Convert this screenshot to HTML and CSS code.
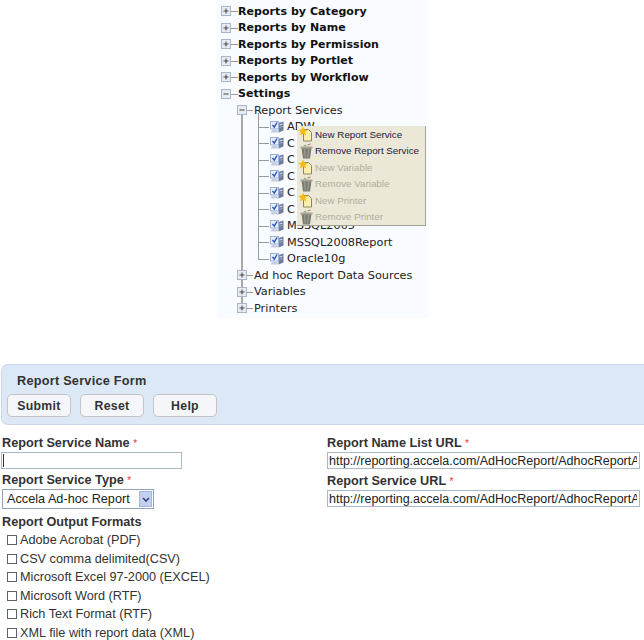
FILE: index.html
```html
<!DOCTYPE html>
<html lang="en">
<head>
<meta charset="utf-8">
<title>Report Service Form</title>
<link rel="stylesheet" href="styles.css">
</head>
<body>
<svg class="defs" width="0" height="0" aria-hidden="true">
  <symbol id="plus" viewBox="0 0 10 10"><rect x=".5" y=".5" width="9" height="9" fill="#e6eaf2" stroke="#aab5c8"/><path d="M2.500 5h5M5 2.500v5" stroke="#444" fill="none"/></symbol>
  <symbol id="minus" viewBox="0 0 10 10"><rect x=".5" y=".5" width="9" height="9" fill="#e6eaf2" stroke="#aab5c8"/><path d="M2.500 5h5" stroke="#444" fill="none"/></symbol>
  <symbol id="server" viewBox="0 0 16 14">
    <path d="M9.500 3l5-1.500v9l-5 2z" fill="#6f7c9e"/>
    <path d="M10.500 4.500l3-.9v1.100l-3 .9z" fill="#d5dbec"/>
    <path d="M10.500 7l3-.9v.8l-3 .9z" fill="#aab4cc"/>
    <rect x="1.500" y="1.500" width="8" height="7.500" fill="#e6effc" stroke="#9bb0d6"/>
    <path d="M3.500 4.800l1.800 2.400 2.700-4.700" stroke="#2a55c2" stroke-width="1.400" fill="none"/>
    <path d="M3 10h5l2 2.500H1.500z" fill="#c3cee2"/>
  </symbol>
  <symbol id="new" viewBox="0 0 18 16">
    <path d="M6.500 3.500h5l3 3v8.500h-8z" fill="#fdeeaf" stroke="#8b8664"/>
    <path d="M6 .5l1.400 3.100 3.500.3-2.700 2.200.9 3.400L6 7.700 2.900 9.500l.9-3.400L1.100 3.900l3.500-.3z" fill="#f5bd14"/>
  </symbol>
  <symbol id="trash" viewBox="0 0 18 16">
    <path d="M4.500 5h10l-1.500 10.500H6z" fill="#7d7d74"/>
    <path d="M7.500 6l.7 8.500M11.500 6l-.7 8.500" stroke="#a3a398" fill="none"/>
    <path d="M3.500 3.500h12v2h-12z" fill="#a8a69a"/>
    <path d="M6 3.500l2-2 2 2z" fill="#8faa80"/>
    <path d="M10.500 2l3-1" stroke="#c26a5a" fill="none"/>
  </symbol>
</svg>

<section class="tree-panel">
  <div class="row top"><svg class="exp"><use href="#plus"/></svg><b>Reports by Category</b></div>
  <div class="row top"><svg class="exp"><use href="#plus"/></svg><b>Reports by Name</b></div>
  <div class="row top"><svg class="exp"><use href="#plus"/></svg><b>Reports by Permission</b></div>
  <div class="row top"><svg class="exp"><use href="#plus"/></svg><b>Reports by Portlet</b></div>
  <div class="row top"><svg class="exp"><use href="#plus"/></svg><b>Reports by Workflow</b></div>
  <div class="row top"><svg class="exp"><use href="#minus"/></svg><b>Settings</b></div>
  <div class="group">
    <div class="row second"><svg class="exp"><use href="#minus"/></svg><span>Report Services</span></div>
    <div class="leaves">
      <div class="row leaf"><svg class="srv"><use href="#server"/></svg><span>ADW</span></div>
      <div class="row leaf"><svg class="srv"><use href="#server"/></svg><span>C</span></div>
      <div class="row leaf"><svg class="srv"><use href="#server"/></svg><span>C</span></div>
      <div class="row leaf"><svg class="srv"><use href="#server"/></svg><span>C</span></div>
      <div class="row leaf"><svg class="srv"><use href="#server"/></svg><span>C</span></div>
      <div class="row leaf"><svg class="srv"><use href="#server"/></svg><span>C</span></div>
      <div class="row leaf"><svg class="srv"><use href="#server"/></svg><span>MSSQL2005</span></div>
      <div class="row leaf"><svg class="srv"><use href="#server"/></svg><span>MSSQL2008Report</span></div>
      <div class="row leaf"><svg class="srv"><use href="#server"/></svg><span>Oracle10g</span></div>
    </div>
    <div class="row second"><svg class="exp"><use href="#plus"/></svg><span>Ad hoc Report Data Sources</span></div>
    <div class="row second"><svg class="exp"><use href="#plus"/></svg><span>Variables</span></div>
    <div class="row second"><svg class="exp"><use href="#plus"/></svg><span>Printers</span></div>
  </div>

  <div class="menu">
    <div class="item"><svg class="mi"><use href="#new"/></svg>New Report Service</div>
    <div class="item"><svg class="mi"><use href="#trash"/></svg>Remove Report Service</div>
    <div class="item off"><svg class="mi"><use href="#new"/></svg>New Variable</div>
    <div class="item off"><svg class="mi"><use href="#trash"/></svg>Remove Variable</div>
    <div class="item off"><svg class="mi"><use href="#new"/></svg>New Printer</div>
    <div class="item off"><svg class="mi"><use href="#trash"/></svg>Remove Printer</div>
  </div>
</section>

<section class="form-head">
  <h2>Report Service Form</h2>
  <div class="btns">
    <button class="btn">Submit</button>
    <button class="btn">Reset</button>
    <button class="btn">Help</button>
  </div>
</section>

<form class="form">
  <div class="col left">
    <label class="lbl">Report Service Name <i>*</i></label>
    <div class="name-wrap"><input class="txt name" type="text"></div>
    <label class="lbl">Report Service Type <i>*</i></label>
    <div class="select"><span>Accela Ad-hoc Report</span><span class="arrow"><svg width="8" height="5" viewBox="0 0 8 5"><path d="M1 1l3 3 3-3" stroke="#2c3f78" stroke-width="1.500" fill="none"/></svg></span></div>
    <div class="lbl formats">Report Output Formats</div>
    <label class="chk"><span class="box"></span>Adobe Acrobat (PDF)</label>
    <label class="chk"><span class="box"></span>CSV comma delimited(CSV)</label>
    <label class="chk"><span class="box"></span>Microsoft Excel 97-2000 (EXCEL)</label>
    <label class="chk"><span class="box"></span>Microsoft Word (RTF)</label>
    <label class="chk"><span class="box"></span>Rich Text Format (RTF)</label>
    <label class="chk"><span class="box"></span>XML file with report data (XML)</label>
  </div>
  <div class="col right">
    <label class="lbl">Report Name List URL <i>*</i></label>
    <input class="txt url" type="text" value="http://reporting.accela.com/AdHocReport/AdhocReportAdminService.asmx">
    <label class="lbl">Report Service URL <i>*</i></label>
    <input class="txt url" type="text" value="http://reporting.accela.com/AdHocReport/AdhocReportAdminService.asmx">
  </div>
</form>
</body>
</html>
```

FILE: styles.css
```css
* { box-sizing: border-box; }
html, body { margin: 0; height: 640px; overflow: hidden; background: #fff; }
body { font-family: "Liberation Sans", Arial, sans-serif; color: #222; }
.defs { position: absolute; }

.tree-panel {
  position: relative;
  margin-left: 217px;
  width: 212px;
  height: 318px;
  padding-top: 3px;
  background: #f8fbff;
  font: 11.300px "DejaVu Sans", Verdana, sans-serif;
  color: #222;
}
.row { display: flex; align-items: center; height: 16.500px; white-space: nowrap; position: relative; }
.row b { font-weight: 700; font-size: 11px; color: #111; letter-spacing: .06px; }
.exp { width: 10px; height: 10px; flex: none; position: relative; z-index: 1; }
.top { padding-left: 4px; }
.top .exp { margin-right: 7px; }
.top::before, .second::before {
  content: ""; position: absolute; top: 8px; height: 1px; background: #999;
}
.top::before { left: 13px; width: 8px; }
.second { padding-left: 20px; }
.second::before { left: 30px; width: 6px; }
.second .exp { margin-right: 7px; }
.group { position: relative; }
.group::before {
  content: ""; position: absolute; left: 24px; top: 12px; bottom: 8px; width: 2px; background: #a8a8a8;
}
.leaves { position: relative; }
.leaves::before {
  content: ""; position: absolute; left: 41px; top: -6px; bottom: 8px; width: 1px; background: #999;
}
.leaf { padding-left: 52px; }
.leaf::before { content: ""; position: absolute; left: 41px; top: 8px; width: 11px; height: 1px; background: #999; }
.srv { width: 16px; height: 14px; flex: none; margin-right: 2px; }

.menu {
  position: absolute;
  left: 80px; top: 126px;
  width: 129px; height: 100px;
  background: #ebe8d8;
  border-right: 1px solid #a5a398;
  border-bottom: 1px solid #a5a398;
  font: 9.800px "Liberation Sans", Arial, sans-serif;
  color: #22223a;
}
.item { display: flex; align-items: center; height: 16.500px; white-space: nowrap; }
.mi { width: 18px; height: 16px; flex: none; }
.off { color: #b0ae9f; }

.form-head {
  margin-top: 46px;
  margin-left: 1px;
  height: 61px;
  padding: 9px 0 0 5px;
  background: #dce8f5;
  border: 1px solid #c8d8ea;
  border-right: 0;
  border-radius: 7px 0 0 7px;
}
.form-head h2 { margin: 0 0 6px 10px; font-size: 12.700px; line-height: 14px; font-weight: 700; color: #333; letter-spacing: .25px; }
.btns { display: flex; gap: 9px; }
.btn {
  width: 64px;
  height: 23px;
  padding: 1px 0 0;
  font: 700 12.300px "Liberation Sans", Arial, sans-serif;
  color: #333;
  letter-spacing: .3px;
  background: #f4f6f9;
  border: 1px solid #c4c4c4;
  border-radius: 5px;
}

.form { display: flex; padding-top: 9px; }
.col { display: flex; flex-direction: column; align-items: flex-start; }
.left { width: 327px; padding-left: 2px; }
.lbl { font-size: 12.700px; line-height: 18px; font-weight: 700; color: #333; height: 18px; white-space: nowrap; }
.lbl i { color: #e33; font-weight: 400; font-size: 10px; font-style: normal; }
.txt { display: block; height: 17px; border: 1px solid #a9b9cc; padding: 0 2px 0 1px; background: #fff; font: 12.500px "Liberation Sans", Arial, sans-serif; color: #222; outline: 0; }
.name-wrap { position: relative; margin-left: -1px; margin-bottom: 2px; }
.name-wrap::after { content: ""; position: absolute; left: 2px; top: 2px; bottom: 2px; width: 1px; background: #333; }
.name { width: 181px; }
.url { width: 313px; margin-bottom: 3px; }
.select {
  display: flex; align-items: center; justify-content: space-between;
  width: 152px; height: 20px; padding: 0 1px 0 4px;
  border: 1px solid #8fa3bd; font-size: 12.700px; color: #222; background: #fff;
  white-space: nowrap;
}
.arrow { width: 13px; height: 16px; flex: none; display: flex; align-items: center; justify-content: center; background: #c3d0ef; border: 1px solid #a7b7dc; }
.formats { margin-top: 4px; }
.chk { display: flex; align-items: center; height: 18.500px; font-size: 12.700px; color: #333; margin-left: 5px; white-space: nowrap; }
.box { width: 10px; height: 10px; margin-right: 3px; border: 1px solid #5a6270; background: #fff; }
```
